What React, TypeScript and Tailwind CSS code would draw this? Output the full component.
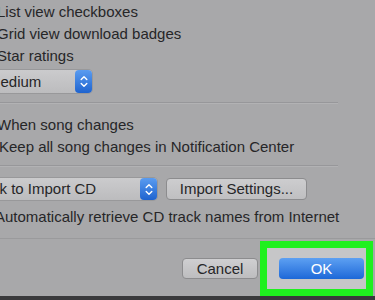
import React from "react";

function Stepper({ h }: { h: string }) {
  return (
    <div
      className={`${h} w-[17px] rounded-[4px] bg-gradient-to-b from-[#5a9cf0] to-[#1e63cf] flex items-center justify-center shrink-0`}
    >
      <svg width="8" height="13" viewBox="0 0 8 13" fill="none">
        <path d="M1.2 4.6 L4 1.8 L6.8 4.6" stroke="white" strokeWidth="1.4" strokeLinecap="round" strokeLinejoin="round" />
        <path d="M1.2 8.4 L4 11.2 L6.8 8.4" stroke="white" strokeWidth="1.4" strokeLinecap="round" strokeLinejoin="round" />
      </svg>
    </div>
  );
}

function Sep({ full }: { full?: boolean }) {
  return (
    <div className={full ? "w-full" : "w-[338px]"}>
      <div className="h-px bg-[#97979a]" />
      <div className="h-px bg-[#b2b2b4]" />
    </div>
  );
}

export default function App() {
  return (
    <div
      className="w-[375px] h-[300px] overflow-hidden bg-[#a8a8aa] text-[#262628] text-[15px] leading-[22px] flex flex-col pt-px"
      style={{ fontFamily: '"Liberation Sans", Arial, sans-serif' }}
    >
      <div className="h-[22px] ml-[-3px] whitespace-nowrap">List view checkboxes</div>
      <div className="h-[22px] ml-[-3px] whitespace-nowrap">Grid view download badges</div>
      <div className="h-[22px] ml-[-3px] whitespace-nowrap">Star ratings</div>

      <div className="mt-[3px] ml-[-20px] w-[112px] h-[23px] flex items-stretch rounded-[4px] bg-gradient-to-b from-[#cbcbcd] to-[#bcbcbe] shadow-[0_0_0_1px_#98989a]">
        <div className="flex-1 pl-[8px] flex items-center whitespace-nowrap">Medium</div>
        <Stepper h="h-[23px]" />
      </div>

      <div className="mt-[9px]">
        <Sep />
      </div>

      <div className="mt-[10px] h-[22px] ml-[-3px] whitespace-nowrap">When song changes</div>
      <div className="h-[22px] ml-[-1px] whitespace-nowrap">Keep all song changes in Notification Center</div>

      <div className="mt-[7px]">
        <Sep />
      </div>

      <div className="mt-[11px] h-[22px] flex items-stretch">
        <div className="ml-[-26px] w-[183px] flex items-stretch rounded-[4px] bg-gradient-to-b from-[#cbcbcd] to-[#bcbcbe] shadow-[0_0_0_1px_#98989a]">
          <div className="flex-1 pl-[8px] flex items-center whitespace-nowrap">Ask to Import CD</div>
          <Stepper h="h-[22px]" />
        </div>
        <div className="ml-[9px] w-[141px] rounded-[4px] bg-gradient-to-b from-[#cdcdcf] to-[#bfbfc1] border border-[#8c8c8e] flex items-center justify-center whitespace-nowrap">
          Import Settings...
        </div>
      </div>

      <div className="mt-[6px] h-[22px] ml-[-5px] whitespace-nowrap">Automatically retrieve CD track names from Internet</div>

      <div className="mt-[10px]">
        <div className="h-px bg-[#9a9a9c]" />
      </div>

      <div className="mt-[2px] h-[55px] flex items-center justify-end pr-[2px]">
        <div className="w-[76px] h-[21px] rounded-[4px] bg-gradient-to-b from-[#cfcfd1] to-[#bdbdbf] border border-[#8c8c8e] flex items-center justify-center">
          Cancel
        </div>
        <div className="ml-[2px] w-[113px] h-[55px] border-[7px] border-[#1ff01f] bg-[#c6c6c8] flex items-center pl-[12px]">
          <div className="w-[85px] h-[21px] rounded-[4px] bg-gradient-to-b from-[#5da0f2] to-[#1c68d8] flex items-center justify-center text-white">
            OK
          </div>
        </div>
      </div>

      <div className="flex-1 bg-[#3a3a3c]" />
    </div>
  );
}
